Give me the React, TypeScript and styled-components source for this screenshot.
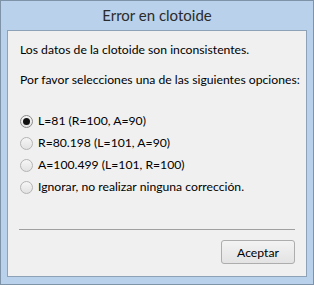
import React, { useState } from "react";
import styled, { createGlobalStyle } from "styled-components";

const Global = createGlobalStyle`
  html, body { margin: 0; padding: 0; background: #ffffff; }
  * { box-sizing: border-box; }
`;

const Window = styled.div`
  width: 314px;
  height: 285px;
  border: 1px solid #7f93a8;
  background: #b9d1ea;
  display: flex;
  flex-direction: column;
  font-family: Lato, "Noto Sans", sans-serif;
`;

const TitleBar = styled.div`
  height: 29px;
  display: flex;
  align-items: center;
  justify-content: center;
  font-size: 15px;
  color: #2b2b2b;
  padding-bottom: 1px;
`;

const Panel = styled.div`
  flex: 1;
  margin: 0 6px 7px 6px;
  border: 1px solid #8ea2b7;
  background: #f0f0f0;
  display: flex;
  flex-direction: column;
  padding: 11px 11px 0 12px;
  font-size: 12.2px;
  color: #000;
`;

const Message = styled.p<{ $gap: number }>`
  margin: 0 0 ${(p) => p.$gap}px 0;
  line-height: 16px;
  white-space: nowrap;
`;

const Options = styled.div`
  display: flex;
  flex-direction: column;
  gap: 6px;
`;

const OptionRow = styled.label`
  display: flex;
  align-items: center;
  gap: 5px;
  height: 16px;
  line-height: 16px;
  white-space: nowrap;
  cursor: default;
`;

const RadioCircle = styled.span<{ $checked: boolean }>`
  width: 13px;
  height: 13px;
  border-radius: 50%;
  border: 1px solid ${(p) => (p.$checked ? "#8a8a8a" : "#b4b4b4")};
  background: linear-gradient(#f6f6f6, #e2e2e2);
  display: flex;
  align-items: center;
  justify-content: center;
  flex: none;
  &::after {
    content: "";
    width: 7px;
    height: 7px;
    border-radius: 50%;
    background: #111;
    display: ${(p) => (p.$checked ? "block" : "none")};
  }
`;

const Separator = styled.hr`
  border: none;
  border-top: 1px solid #a0a0a0;
  margin: 34px 0 0 -1px;
  width: 276px;
  height: 0;
`;

const Footer = styled.div`
  display: flex;
  justify-content: flex-end;
  padding-top: 10px;
`;

const Button = styled.button`
  width: 74px;
  height: 24px;
  border: 1px solid #adadad;
  border-radius: 3px;
  background: linear-gradient(#f3f3f3, #e3e3e3);
  font-family: inherit;
  font-size: 12.2px;
  color: #000;
  padding: 0;
`;

const options = [
  "L=81 (R=100, A=90)",
  "R=80.198 (L=101, A=90)",
  "A=100.499 (L=101, R=100)",
  "Ignorar, no realizar ninguna corrección.",
];

export default function App() {
  const [sel, setSel] = useState(0);
  return (
    <>
      <Global />
      <Window>
        <TitleBar>Error en clotoide</TitleBar>
        <Panel>
          <Message $gap={14}>Los datos de la clotoide son inconsistentes.</Message>
          <Message $gap={25}>Por favor selecciones una de las siguientes opciones:</Message>
          <Options>
            {options.map((o, i) => (
              <OptionRow key={o} onClick={() => setSel(i)}>
                <RadioCircle $checked={sel === i} />
                {o}
              </OptionRow>
            ))}
          </Options>
          <Separator />
          <Footer>
            <Button>Aceptar</Button>
          </Footer>
        </Panel>
      </Window>
    </>
  );
}
